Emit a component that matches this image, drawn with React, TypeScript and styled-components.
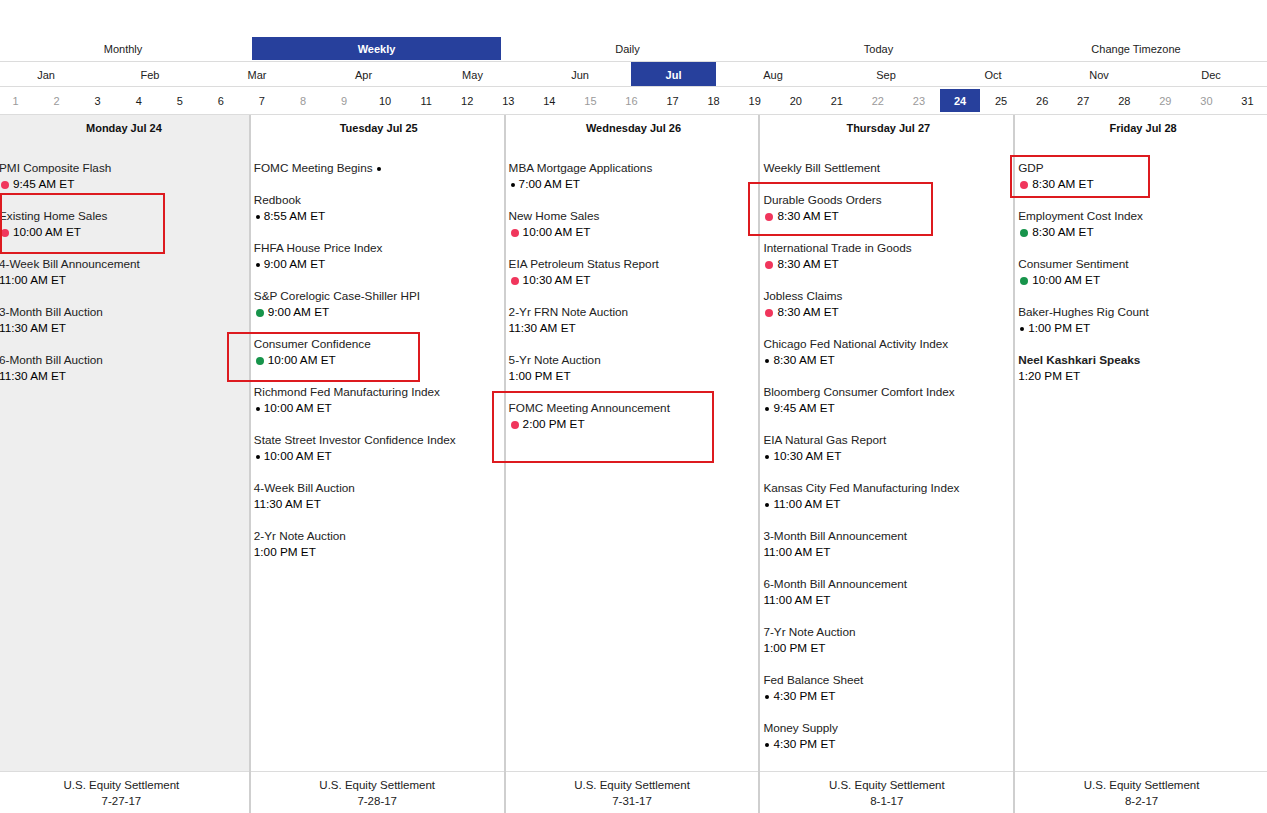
import React from "react";
import styled, { createGlobalStyle, css } from "styled-components";

const GlobalStyle = createGlobalStyle`
  html, body { margin: 0; padding: 0; background: #fff; }
  body { font-family: "Liberation Sans", Arial, sans-serif; color: #222; overflow: hidden; }
`;

const BLUE = "#27409c";
const LINE = "#dcdcdc";
const COLBORDER = "#cfcfcf";

const Page = styled.div`
  position: relative;
  width: 1267px;
  height: 813px;
  overflow: hidden;
  padding-top: 37px;
  box-sizing: border-box;
`;

const Frame = styled.div`
  margin-left: -5px;
  width: 1273px;
  display: flex;
  flex-direction: column;
  height: 776px;
`;

const TabRow = styled.div`
  display: grid;
  grid-template-columns: 256px 251px 251px 251px 264px;
  height: 24px;
  border-bottom: 1px solid ${LINE};
`;

const Tab = styled.div<{ $active?: boolean }>`
  display: flex;
  align-items: center;
  justify-content: center;
  font-size: 11px;
  color: #222;
  height: 23px;
  ${(p) =>
    p.$active &&
    css`
      background: ${BLUE};
      color: #fff;
      font-weight: 700;
      margin: 0 1px;
    `}
`;

const MonthRow = styled.div`
  display: grid;
  grid-template-columns: 102px 106px 108px 105px 113px 102px 85px 114px 112px 102px 110px 114px;
  height: 24px;
  border-bottom: 1px solid ${LINE};
`;

const Month = styled.div<{ $active?: boolean }>`
  display: flex;
  align-items: center;
  justify-content: center;
  font-size: 11px;
  color: #222;
  padding-top: 1px;
  box-sizing: border-box;
  ${(p) =>
    p.$active &&
    css`
      background: ${BLUE};
      color: #fff;
      font-weight: 700;
    `}
`;

const DayRow = styled.div`
  display: grid;
  grid-template-columns: repeat(31, 1fr);
  height: 27px;
  border-bottom: 1px solid ${LINE};
  align-items: center;
`;

const Day = styled.div<{ $weekend?: boolean; $active?: boolean }>`
  display: flex;
  align-items: center;
  justify-content: center;
  height: 23px;
  font-size: 11px;
  color: ${(p) => (p.$weekend ? "#9a9a9a" : "#1a1a1a")};
  ${(p) =>
    p.$active &&
    css`
      background: ${BLUE};
      color: #fff;
      font-weight: 700;
      margin: 0 1px;
    `}
`;

const Week = styled.div`
  flex: 1;
  display: grid;
  grid-template-columns: repeat(5, 1fr);
  margin-left: -1px;
`;

const Column = styled.div<{ $first?: boolean }>`
  display: flex;
  flex-direction: column;
  border-left: ${(p) => (p.$first ? "none" : `2px solid ${COLBORDER}`)};
  min-width: 0;
`;

const ColBody = styled.div<{ $today?: boolean }>`
  flex: 1;
  background: ${(p) => (p.$today ? "#eeeeee" : "#fff")};
  padding: 5px 0 0 ${(p) => (p.$today ? "5px" : "3px")};
`;

const DayHeader = styled.div`
  font-size: 11px;
  font-weight: 700;
  line-height: 16px;
  text-align: center;
  color: #111;
  margin-bottom: 24px;
`;

const EventList = styled.div`
  display: flex;
  flex-direction: column;
`;

const Event = styled.div`
  margin-bottom: 16px;
  font-size: 11.75px;
  line-height: 16px;
`;

const Title = styled.div<{ $bold?: boolean }>`
  color: #222;
  white-space: nowrap;
  font-weight: ${(p) => (p.$bold ? 700 : 400)};
  display: flex;
  align-items: center;
`;

const TimeLine = styled.div`
  display: flex;
  align-items: center;
  color: #000;
  white-space: nowrap;
`;

type DotKind = "red" | "green" | "black";

const Dot = styled.span<{ $kind: DotKind; $after?: boolean }>`
  display: inline-block;
  flex: none;
  border-radius: 50%;
  ${(p) =>
    p.$kind === "black"
      ? css`
          width: 4px;
          height: 4px;
          background: #000;
          margin: ${p.$after ? "1px 0 0 4px" : "1px 4px 0 2px"};
        `
      : css`
          width: 8px;
          height: 8px;
          background: ${p.$kind === "red" ? "#f0365c" : "#17944b"};
          margin: 1px 4px 0 2px;
        `}
`;

const Footer = styled.div`
  height: 42px;
  border-top: 1px solid ${LINE};
  box-sizing: border-box;
  padding-top: 5px;
  text-align: center;
  font-size: 11.5px;
  line-height: 16px;
  color: #222;
`;

const Annotation = styled.div`
  position: absolute;
  border: 2px solid #dd1a1f;
  box-sizing: border-box;
  pointer-events: none;
`;

type Ev = { t: string; time?: string; dot?: DotKind; afterDot?: boolean; bold?: boolean };

const days: { label: string; settle: string; events: Ev[] }[] = [
  {
    label: "Monday Jul 24",
    settle: "7-27-17",
    events: [
      { t: "PMI Composite Flash", time: "9:45 AM ET", dot: "red" },
      { t: "Existing Home Sales", time: "10:00 AM ET", dot: "red" },
      { t: "4-Week Bill Announcement", time: "11:00 AM ET" },
      { t: "3-Month Bill Auction", time: "11:30 AM ET" },
      { t: "6-Month Bill Auction", time: "11:30 AM ET" },
    ],
  },
  {
    label: "Tuesday Jul 25",
    settle: "7-28-17",
    events: [
      { t: "FOMC Meeting Begins", afterDot: true },
      { t: "Redbook", time: "8:55 AM ET", dot: "black" },
      { t: "FHFA House Price Index", time: "9:00 AM ET", dot: "black" },
      { t: "S&P Corelogic Case-Shiller HPI", time: "9:00 AM ET", dot: "green" },
      { t: "Consumer Confidence", time: "10:00 AM ET", dot: "green" },
      { t: "Richmond Fed Manufacturing Index", time: "10:00 AM ET", dot: "black" },
      { t: "State Street Investor Confidence Index", time: "10:00 AM ET", dot: "black" },
      { t: "4-Week Bill Auction", time: "11:30 AM ET" },
      { t: "2-Yr Note Auction", time: "1:00 PM ET" },
    ],
  },
  {
    label: "Wednesday Jul 26",
    settle: "7-31-17",
    events: [
      { t: "MBA Mortgage Applications", time: "7:00 AM ET", dot: "black" },
      { t: "New Home Sales", time: "10:00 AM ET", dot: "red" },
      { t: "EIA Petroleum Status Report", time: "10:30 AM ET", dot: "red" },
      { t: "2-Yr FRN Note Auction", time: "11:30 AM ET" },
      { t: "5-Yr Note Auction", time: "1:00 PM ET" },
      { t: "FOMC Meeting Announcement", time: "2:00 PM ET", dot: "red" },
    ],
  },
  {
    label: "Thursday Jul 27",
    settle: "8-1-17",
    events: [
      { t: "Weekly Bill Settlement" },
      { t: "Durable Goods Orders", time: "8:30 AM ET", dot: "red" },
      { t: "International Trade in Goods", time: "8:30 AM ET", dot: "red" },
      { t: "Jobless Claims", time: "8:30 AM ET", dot: "red" },
      { t: "Chicago Fed National Activity Index", time: "8:30 AM ET", dot: "black" },
      { t: "Bloomberg Consumer Comfort Index", time: "9:45 AM ET", dot: "black" },
      { t: "EIA Natural Gas Report", time: "10:30 AM ET", dot: "black" },
      { t: "Kansas City Fed Manufacturing Index", time: "11:00 AM ET", dot: "black" },
      { t: "3-Month Bill Announcement", time: "11:00 AM ET" },
      { t: "6-Month Bill Announcement", time: "11:00 AM ET" },
      { t: "7-Yr Note Auction", time: "1:00 PM ET" },
      { t: "Fed Balance Sheet", time: "4:30 PM ET", dot: "black" },
      { t: "Money Supply", time: "4:30 PM ET", dot: "black" },
    ],
  },
  {
    label: "Friday Jul 28",
    settle: "8-2-17",
    events: [
      { t: "GDP", time: "8:30 AM ET", dot: "red" },
      { t: "Employment Cost Index", time: "8:30 AM ET", dot: "green" },
      { t: "Consumer Sentiment", time: "10:00 AM ET", dot: "green" },
      { t: "Baker-Hughes Rig Count", time: "1:00 PM ET", dot: "black" },
      { t: "Neel Kashkari Speaks", time: "1:20 PM ET", bold: true },
    ],
  },
];

const tabs = ["Monthly", "Weekly", "Daily", "Today", "Change Timezone"];
const months = ["Jan", "Feb", "Mar", "Apr", "May", "Jun", "Jul", "Aug", "Sep", "Oct", "Nov", "Dec"];
const weekend = new Set([1, 2, 8, 9, 15, 16, 22, 23, 29, 30]);

const boxes = [
  { l: 0, t: 193, w: 165, h: 61 },
  { l: 227, t: 332, w: 193, h: 50 },
  { l: 492, t: 391, w: 222, h: 72 },
  { l: 748, t: 182, w: 185, h: 54 },
  { l: 1010, t: 155, w: 140, h: 43 },
];

export default function App() {
  return (
    <>
      <GlobalStyle />
      <Page>
        <Frame>
          <TabRow>
            {tabs.map((t) => (
              <Tab key={t} $active={t === "Weekly"}>
                {t}
              </Tab>
            ))}
          </TabRow>
          <MonthRow>
            {months.map((m) => (
              <Month key={m} $active={m === "Jul"}>
                {m}
              </Month>
            ))}
          </MonthRow>
          <DayRow>
            {Array.from({ length: 31 }, (_, i) => i + 1).map((d) => (
              <Day key={d} $weekend={weekend.has(d)} $active={d === 24}>
                {d}
              </Day>
            ))}
          </DayRow>
          <Week>
            {days.map((day, i) => (
              <Column key={day.label} $first={i === 0}>
                <ColBody $today={i === 0}>
                  <DayHeader>{day.label}</DayHeader>
                  <EventList>
                    {day.events.map((e) => (
                      <Event key={e.t}>
                        <Title $bold={e.bold}>
                          {e.t}
                          {e.afterDot && <Dot $kind="black" $after />}
                        </Title>
                        {e.time && (
                          <TimeLine>
                            {e.dot && <Dot $kind={e.dot} />}
                            {e.time}
                          </TimeLine>
                        )}
                      </Event>
                    ))}
                  </EventList>
                </ColBody>
                <Footer>
                  U.S. Equity Settlement
                  <br />
                  {day.settle}
                </Footer>
              </Column>
            ))}
          </Week>
        </Frame>
        {boxes.map((b, i) => (
          <Annotation key={i} style={{ left: b.l, top: b.t, width: b.w, height: b.h }} />
        ))}
      </Page>
    </>
  );
}
